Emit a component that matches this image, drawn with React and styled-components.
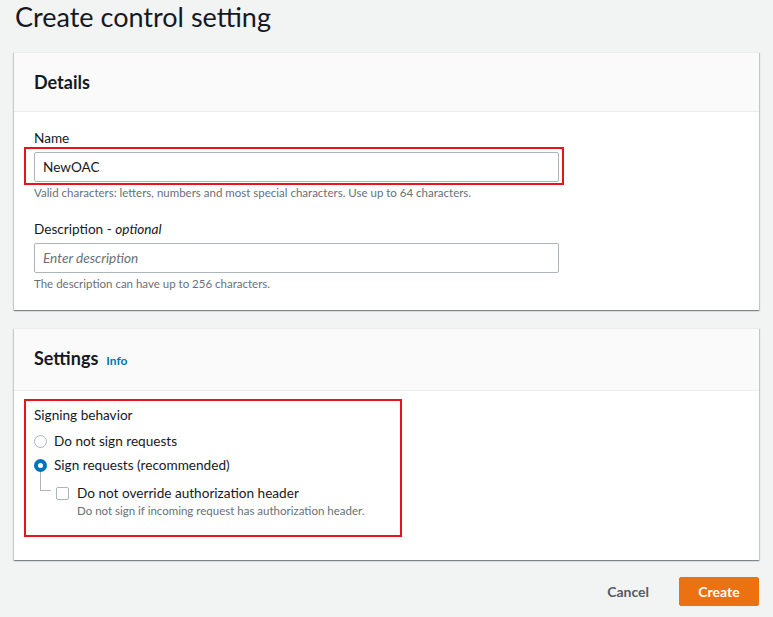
import React from 'react';
import styled, { createGlobalStyle } from 'styled-components';

const FONT = '"Lato", "Open Sans", "Liberation Sans", sans-serif';

const GlobalStyle = createGlobalStyle`
  html, body {
    margin: 0;
    padding: 0;
    background: #f2f3f3;
  }
  body {
    font-family: ${FONT};
    color: #16191f;
  }
`;

const App = () => {
  return (
    <Page>
      <GlobalStyle />
      <Title>Create control setting</Title>

      <Card>
        <CardHeader>
          <CardTitle>Details</CardTitle>
        </CardHeader>
        <CardBody>
          <Field>
            <Label>Name</Label>
            <Highlight>
              <Input defaultValue="NewOAC" />
            </Highlight>
            <Hint>Valid characters: letters, numbers and most special characters. Use up to 64 characters.</Hint>
          </Field>
          <Field>
            <Label>Description - <em>optional</em></Label>
            <Input placeholder="Enter description" />
            <Hint>The description can have up to 256 characters.</Hint>
          </Field>
        </CardBody>
      </Card>

      <Card>
        <CardHeader $tall>
          <CardTitle>Settings</CardTitle>
          <InfoLink>Info</InfoLink>
        </CardHeader>
        <SettingsBody>
          <Frame>
            <Label>Signing behavior</Label>
            <RadioRow>
              <Radio />
              <OptionText>Do not sign requests</OptionText>
            </RadioRow>
            <RadioRow>
              <Radio $checked />
              <OptionText>Sign requests (recommended)</OptionText>
            </RadioRow>
            <SubOption>
              <TreeLine />
              <Checkbox />
              <SubText>
                <OptionText>Do not override authorization header</OptionText>
                <SubHint>Do not sign if incoming request has authorization header.</SubHint>
              </SubText>
            </SubOption>
          </Frame>
        </SettingsBody>
      </Card>

      <Footer>
        <CancelButton>Cancel</CancelButton>
        <PrimaryButton>Create</PrimaryButton>
      </Footer>
    </Page>
  );
};

const Page = styled.div`
  padding: 0 14px;
  width: 745px;
`;

const Title = styled.h1`
  margin: 0 0 18px;
  padding-left: 1px;
  font-size: 27px;
  font-weight: 400;
  line-height: 34px;
  color: #16191f;
`;

const Card = styled.section`
  background: #fff;
  box-shadow: 0 1px 1px 0 rgba(0, 28, 36, 0.3), 1px 1px 1px 0 rgba(0, 28, 36, 0.15),
    -1px 1px 1px 0 rgba(0, 28, 36, 0.15);
  border-top: 1px solid #eaeded;
  margin-bottom: 18px;

  & + & {
    margin-bottom: 17px;
  }
`;

const CardHeader = styled.div`
  display: flex;
  align-items: baseline;
  gap: 8px;
  background: #fafafa;
  border-bottom: 1px solid #eaeded;
  height: ${(p) => (p.$tall ? '62px' : '59px')};
  padding: 0 20px;
  box-sizing: border-box;
  line-height: 58px;
`;

const CardTitle = styled.h2`
  margin: 0;
  font-size: 18px;
  font-weight: 700;
  color: #16191f;
`;

const InfoLink = styled.a`
  font-size: 12px;
  font-weight: 700;
  color: #0073bb;
  cursor: pointer;
`;

const CardBody = styled.div`
  display: flex;
  flex-direction: column;
  gap: 18px;
  padding: 16px 20px 18px;
`;

const SettingsBody = styled.div`
  padding: 8px 20px 23px 10px;
`;

const Field = styled.div`
  display: flex;
  flex-direction: column;
`;

const Label = styled.div`
  font-size: 13.6px;
  line-height: 20px;
  margin-bottom: 4px;
  color: #16191f;

  em {
    font-style: italic;
  }
`;

const Highlight = styled.div`
  position: relative;
  align-self: flex-start;

  &::after {
    content: '';
    position: absolute;
    inset: -5px -5px -3px -10px;
    border: 2px solid #e8141c;
    pointer-events: none;
  }
`;

const Frame = styled.div`
  display: flex;
  flex-direction: column;
  box-sizing: border-box;
  width: 378px;
  height: 138px;
  padding: 4px 8px 0;
  border: 2px solid #e8141c;
`;

const Input = styled.input`
  display: block;
  box-sizing: border-box;
  width: 525px;
  height: 30px;
  padding: 0 8px;
  border: 1px solid #aab7b8;
  border-radius: 2px;
  font-family: ${FONT};
  font-size: 13.6px;
  color: #16191f;
  background: #fff;
  outline: none;

  &::placeholder {
    color: #687078;
    font-style: italic;
  }
`;

const Hint = styled.div`
  font-size: 11.5px;
  line-height: 16px;
  margin-top: 3px;
  color: #687078;
`;

const RadioRow = styled.div`
  display: flex;
  align-items: center;
  gap: 7px;
  height: 24px;
`;

const Radio = styled.span`
  box-sizing: border-box;
  width: 13px;
  height: 13px;
  border-radius: 50%;
  flex: none;
  border: ${(p) => (p.$checked ? '4px solid #0073bb' : '1px solid #aab7b8')};
  background: #fff;
`;

const OptionText = styled.span`
  font-size: 13.6px;
  line-height: 20px;
  color: #16191f;
`;

const SubOption = styled.div`
  position: relative;
  display: flex;
  align-items: flex-start;
  gap: 8px;
  padding: 6px 0 0 22px;
`;

const TreeLine = styled.span`
  position: absolute;
  left: 6px;
  top: -5px;
  width: 10px;
  height: 18px;
  border-left: 1px solid #aab7b8;
  border-bottom: 1px solid #aab7b8;
`;

const Checkbox = styled.span`
  box-sizing: border-box;
  width: 13px;
  height: 13px;
  margin-top: 4px;
  border: 1px solid #aab7b8;
  border-radius: 2px;
  background: #fff;
  flex: none;
`;

const SubText = styled.div`
  display: flex;
  flex-direction: column;
`;

const SubHint = styled.span`
  font-size: 11.5px;
  line-height: 16px;
  color: #687078;
`;

const Footer = styled.div`
  display: flex;
  justify-content: flex-end;
  align-items: center;
  gap: 30px;
`;

const CancelButton = styled.button`
  border: none;
  background: none;
  padding: 0;
  font-family: ${FONT};
  font-size: 14px;
  font-weight: 700;
  color: #545b64;
  cursor: pointer;
`;

const PrimaryButton = styled.button`
  width: 80px;
  height: 29px;
  border: 1px solid #ec7211;
  border-radius: 2px;
  background: #ec7211;
  color: #fff;
  font-family: ${FONT};
  font-size: 14px;
  font-weight: 700;
  cursor: pointer;
`;

export default App;
